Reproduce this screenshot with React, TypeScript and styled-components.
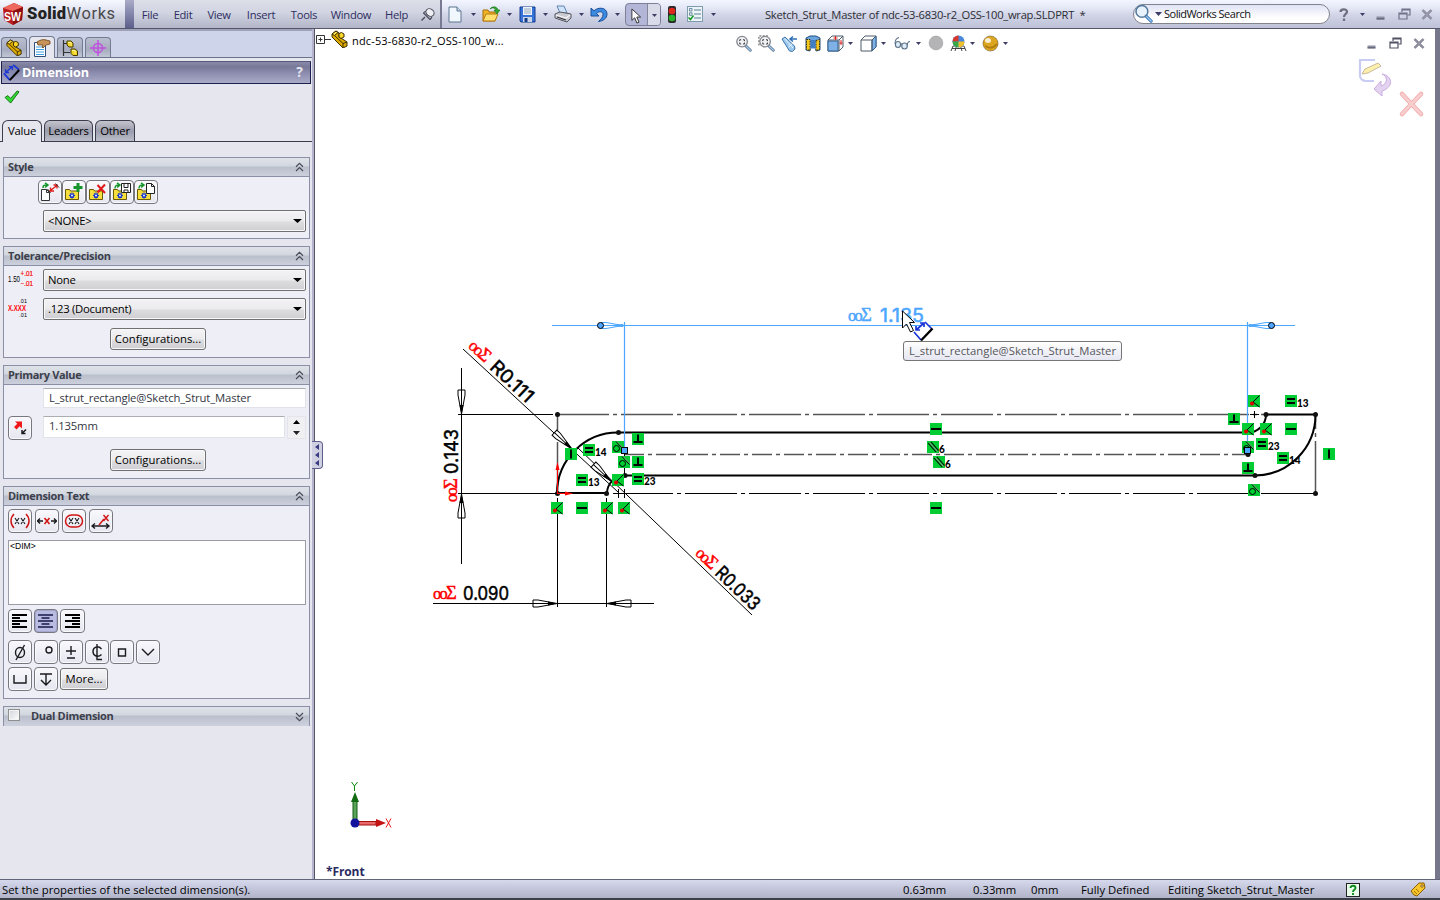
import React from 'react';
import styled, { createGlobalStyle, css } from 'styled-components';

const Global = createGlobalStyle`
  * { box-sizing: border-box; }
  html, body { margin: 0; padding: 0; }
  body { background: #fff; font-family: 'Open Sans', 'Noto Sans', sans-serif; font-size: 11.3px; color: #111; overflow: hidden; }
  svg { display: block; flex: none; }
`;

/* ---------- frame ---------- */
const Window = styled.div`
  width: 1440px; height: 900px; display: flex; flex-direction: column; overflow: hidden;
`;
const TopBar = styled.header`
  height: 29px; flex: none; display: flex; align-items: stretch;
  background: linear-gradient(#f3f6ff 0, #e4e8f6 8px, #d3d7e8 14px, #bfc2d8 27px);
  border-bottom: 1px solid #55566a; color: #2d2d62;
`;
const Brand = styled.div`
  width: 125px; display: flex; align-items: center; gap: 3px; padding: 0 0 1px 2px;
  background: linear-gradient(#f6f8ff 0, #e3e6f2 10px, #d0d3e0 16px, #b6b9c9 27px);
`;
const BrandName = styled.div`
  font: 16.5px/20px 'Roboto', sans-serif; color: #4a4a4c; letter-spacing: 0.6px; padding-top: 1px;
  b { font-weight: 900; color: #222; letter-spacing: 0.3px; }
`;
const BrandEdge = styled.div`
  width: 9px; background: linear-gradient(#a9abc8, #5d5f8c);
`;
const MenuBar = styled.nav`
  width: 308px; display: flex; align-items: center; padding: 1px 0 0 0;
  background: linear-gradient(#dcdfe8 0, #d2d5e2 12px, #b4b7c9 27px);
  border-right: 2px solid #777a92;
  svg { margin-left: 5px; }
`;
const MenuItem = styled.span<{ $w: number }>`
  width: ${p => p.$w}px; text-align: center; font-size: 11.2px; letter-spacing: -0.3px; color: #2d2d62;
`;
const Tools = styled.div`
  display: flex; align-items: center; width: 322px; padding-left: 2px;
`;
const Slot = styled.span<{ $w?: number }>`
  width: ${p => p.$w ?? 22}px; height: 24px; display: flex; align-items: center; justify-content: center; flex: none;
`;
const SplitButton = styled.span`
  width: 36px; height: 23px; margin: 0 3px 0 1px; display: flex; flex: none; border: 1px solid #7e7f98; border-radius: 4px; overflow: hidden;
  background: #b4b6d8;
  > * + * { background: #d9dbe9; border-left: 1px solid #85869c; }
`;
const DocTitle = styled.div`
  width: 369px; align-self: center; padding-left: 1px; color: #2c2c35; font-size: 11.2px; white-space: pre; letter-spacing: -0.27px;
`;
const SearchBox = styled.div`
  width: 197px; height: 20px; align-self: center; display: flex; align-items: center; border: 1px solid #83848f; border-radius: 10px;
  background: linear-gradient(#dfe3f4, #fff 70%); color: #111; font-size: 11px; letter-spacing: -0.5px; gap: 2px; padding-bottom: 1px;
`;
const WindowKeys = styled.div`
  display: flex; align-items: center; padding-left: 4px;
`;
const Body = styled.div`
  flex: 1; display: flex; min-height: 0;
`;
const StatusBar = styled.footer`
  height: 21px; flex: none; display: flex; align-items: center; padding: 1px 0 0 2px; color: #000;
  border-top: 1px solid #62647a; border-bottom: 2px solid #3d4048;
  background: linear-gradient(#d6d8ec, #c3c6db 50%, #b2b5ca);
`;
const StatusCell = styled.span<{ $w: number }>`
  width: ${p => p.$w}px; flex: none; white-space: nowrap;
`;

/* ---------- property manager ---------- */
const Panel = styled.aside`
  width: 315px; flex: none; background: #e6e6ef; display: flex; flex-direction: column; position: relative;
  border-right: 1px solid #55566e; box-shadow: inset -2px 0 #b4b5cb; padding-right: 2px;
`;
const TabStrip = styled.div`
  height: 29px; flex: none; background: #ced4e9; border-top: 2px solid #9fa1b9; border-bottom: 1px solid #6c7489;
  display: flex; align-items: flex-end; gap: 2px; padding-left: 1px;
`;
const IconTab = styled.div<{ $on?: boolean }>`
  width: 26px; height: ${p => (p.$on ? 22 : 20)}px; margin-bottom: ${p => (p.$on ? -1 : 0)}px;
  border: 1px solid #727b90; border-bottom: 0; border-radius: 4px 4px 0 0;
  background: ${p => (p.$on ? '#e6e6ef' : 'linear-gradient(#b9bfd0, #a6acbd 60%, #c0c6d5)')};
  display: flex; align-items: center; justify-content: center;
`;
const TitleBar = styled.div`
  height: 23px; flex: none; margin: 3px 1px 0 1px; padding: 0 7px 0 1px; border: 1px solid #1c2150; border-top-color: #55587c;
  background: linear-gradient(#8a8bab 0, #777898 5px, #8c8daf 11px, #a9aac6 21px);
  display: flex; align-items: center; gap: 2px; color: #fff;
  svg { margin-top: -1px; }
  b { flex: 1; font-size: 12.6px; letter-spacing: -0.05px; }
  i { font: 700 14px/18px 'Open Sans', sans-serif; margin-top: -2px; color: #e4e4ee; }
`;
const OkRow = styled.div`
  height: 36px; flex: none; padding: 6px 0 0 4px;
`;
const PageTabs = styled.div`
  height: 22px; flex: none; border-bottom: 1px solid #3b3d4c; display: flex; align-items: flex-end; gap: 2px; padding-left: 2px;
`;
const PageTab = styled.div<{ $w: number; $on?: boolean }>`
  width: ${p => p.$w}px; height: ${p => (p.$on ? 22 : 21)}px; margin-bottom: ${p => (p.$on ? -1 : 0)}px;
  border: 1px solid #3b3d4c; border-bottom: 0; border-radius: 6px 6px 0 0; text-align: center; line-height: 20px;
  background: ${p => (p.$on ? '#e6e6ef' : 'linear-gradient(#c3c4cc, #9b9dad 50%, #bbbdca)')};
  font-size: 11.3px; letter-spacing: -0.2px; color: #000;
`;
const Groups = styled.div`
  display: flex; flex-direction: column; gap: 7px; padding: 15px 2px 0 3px;
`;
const GroupBox = styled.section<{ $h: number }>`
  height: ${p => p.$h}px; border: 1px solid #8b8fa5; background: #eeeef7; display: flex; flex-direction: column;
`;
const GroupHead = styled.div<{ $open?: boolean }>`
  height: 19px; flex: none; padding: 0 5px 0 4px; display: flex; align-items: center;
  background: linear-gradient(#dfe2e8 0, #d2d7df 8px, #b9bfcb 9px, #ccd0dc 18px);
  ${p => p.$open && css`border-bottom: 1px solid #8b8fa5;`}
  b { flex: 1; font-size: 11px; line-height: 16px; margin-top: ${p => (p.$open ? 0 : -1)}px; color: #3c3f4c; font-weight: 700; letter-spacing: -0.33px; }
`;
const Row = styled.div<{ $l?: number; $t?: number; $gap?: number; $h?: number }>`
  display: flex; align-items: flex-start; padding-left: ${p => p.$l ?? 4}px; margin-top: ${p => p.$t ?? 0}px; gap: ${p => p.$gap ?? 0}px;
  height: ${p => p.$h ?? 24}px; flex: none;
`;
const Key = styled.span<{ $on?: boolean; $w?: number; $h?: number }>`
  width: ${p => p.$w ?? 24}px; height: ${p => p.$h ?? 24}px; flex: none; border: 1px solid #77787f; border-radius: 4px;
  display: flex; align-items: center; justify-content: center;
  background: ${p => (p.$on ? '#b9bbe0' : 'linear-gradient(#f8f8fc, #e6e6f0)')};
  box-shadow: inset 0 0 0 1px ${p => (p.$on ? '#a5a7cf' : '#fafafd')};
`;
const Combo = styled.div`
  width: 263px; height: 22px; flex: none; border: 1px solid #707070; border-radius: 2px; padding: 0 3px 1px 4px;
  background: linear-gradient(#f3f3f5 0, #ebebee 10px, #dddde0 11px, #cfcfd3 20px); box-shadow: inset 0 0 0 1px #f8f8fa;
  display: flex; align-items: center; justify-content: space-between; color: #000; letter-spacing: -0.25px; line-height: 18px;
`;
const PushButton = styled.div<{ $w: number }>`
  width: ${p => p.$w}px; height: 22px; flex: none; border: 1px solid #707070; border-radius: 3px; color: #000;
  background: linear-gradient(#f4f4f6 0, #ebebee 10px, #dddde0 11px, #cfcfd3 20px); box-shadow: inset 0 0 0 1px #f8f8fa;
  text-align: center; line-height: 20px;
`;
const Gutter = styled.span`
  width: 35px; height: 22px; flex: none; display: flex;
`;
const Field = styled.div<{ $w: number; $h: number }>`
  width: ${p => p.$w}px; height: ${p => p.$h}px; flex: none; background: #fff; border: 1px solid #e2e3ea; border-top-color: #abadb3;
  padding: 1px 5px; line-height: 16px; color: #33363f; letter-spacing: -0.14px;
`;
const Spinner = styled.div`
  width: 19px; height: 23px; margin-left: 2px; background: #f0f0f3; border: 1px solid #e4e4ea;
  display: flex; flex-direction: column; justify-content: space-around; align-items: center;
`;
const NoteArea = styled.div`
  height: 65px; flex: none; margin: 7px 3px 0 4px; border: 1px solid #9a9ca8; background: #fff;
  font: 8.6px/10px 'Liberation Sans', Arial, sans-serif; color: #000; padding-left: 1px;
`;
const Check = styled.span`
  width: 12px; height: 12px; margin: -3px 11px 0 0; border: 1px solid #8e8f8f; background: linear-gradient(135deg, #cfd3da, #fff);
  box-shadow: inset 0 0 0 1px #f4f4f4;
`;
const Splitter = styled.div`
  position: absolute; left: 312px; top: 412px; width: 11px; height: 28px; z-index: 2; border: 1px solid #5f618c; border-left: 0;
  border-radius: 0 4px 4px 0; background: #cfd0e2; display: flex; align-items: center; justify-content: center;
`;

/* ---------- graphics area ---------- */
const Viewport = styled.main`
  flex: 1; position: relative; background: #fff; border-right: 5px solid #76778a; overflow: hidden;
`;
const TreeNode = styled.div`
  position: absolute; left: 1px; top: 0; height: 22px; display: flex; align-items: center;
  font-size: 11px; color: #000; svg + svg { margin: -3px 0 0 -1px; } span { margin-left: 3px; padding-top: 1px; letter-spacing: 0.15px; }
`;
const HeadsUp = styled.div`
  position: absolute; left: 417px; top: 2px; display: flex; height: 24px; align-items: center;
`;
const DocKeys = styled.div`
  position: absolute; right: 4px; top: 2px; display: flex; height: 24px;
`;
const Corner = styled.div`
  position: absolute; left: 1043px; top: 29px;
`;
const Tip = styled.div`
  position: absolute; left: 588px; top: 312px; width: 219px; height: 20px; border: 1px solid #767676; border-radius: 3px;
  background: linear-gradient(#fff, #e5e6f1); color: #55565c; text-align: center; line-height: 17px; white-space: nowrap;
`;
const ViewName = styled.b`
  position: absolute; left: 11px; top: 835px; font-size: 12px; line-height: 16px; color: #2a2a60; letter-spacing: -0.1px;
`;
const Canvas = styled.svg`
  position: absolute; left: 0; top: 0;
`;

/* ---------- small glyphs ---------- */
const Caret = ({ c = '#3c3d66', w = 5 }: { c?: string; w?: number }) => (
  <svg width={w} height={w === 5 ? 3 : 4} viewBox="0 0 10 6" preserveAspectRatio="none"><path d="M0 0h10L5 6z" fill={c} /></svg>
);
const Chevrons = ({ down }: { down?: boolean }) => (
  <svg width="9" height="10" viewBox="0 0 9 10" fill="none" stroke="#484b58" strokeWidth="1.2" transform={down ? 'scale(1,-1)' : undefined}>
    <path d="M1 4.8 4.5 1.4 8 4.8M1 9 4.5 5.6 8 9" />
  </svg>
);
const Logo = () => (
  <svg width="22" height="23" viewBox="0 0 22 23">
    <path d="M1 6 12 1l9 4-1 13-9 5L2 18z" fill="#b91c1c" />
    <path d="M1 6 12 1l9 4-10 4z" fill="#ef6a5e" />
    <path d="M11 9l10-4-1 13-9 5z" fill="#8e0f12" />
    <text x="2" y="18.5" fontFamily="Liberation Sans" fontWeight="700" fontSize="12.5" fill="#fff" textLength="17" lengthAdjust="spacingAndGlyphs">SW</text>
  </svg>
);
const Part = ({ s = 18 }: { s?: number }) => (
  <svg width={s} height={s} viewBox="0 0 18 18" stroke="#3a2c00" strokeWidth="1" strokeLinejoin="round">
    <path d="M1 4 5 1l3 2v4l5 3 3 2v4l-4 2L3 9 1 7z" fill="#e0ab00" />
    <path d="M1 4 5 1l2 1.500-3.500 3z" fill="#ffe14d" />
    <path d="M8 3.500 10.500 2.500 13 4v3l-3 1.500L8 7z" fill="#ffd829" />
    <path d="M3.500 5.500l8.500 8v4M12 13.500l4-1.500" fill="none" />
  </svg>
);
const Pin = () => (
  <svg width="16" height="16" viewBox="0 0 16 16" fill="#d5d6de" stroke="#4b4c5c" strokeWidth="1.1">
    <path d="M5 10 1.500 13.500" strokeWidth="1.500" /><path d="M3.500 6l6.500 6.500c1.500-1 2-2.500 1.500-4L8 4.500C6 4 4.500 4.500 3.500 6z" fill="#b4b5c2" /><ellipse cx="10" cy="5.500" rx="4.300" ry="3.500" transform="rotate(35 10 5.500)" fill="#eeeef3" />
  </svg>
);
const NewDoc = () => (
  <svg width="14" height="17" viewBox="0 0 14 17"><path d="M1 1h8l4 4v11H1z" fill="#f0f8fd" stroke="#5d7590" /><path d="M9 1v4h4" fill="#c9dced" stroke="#5d7590" /></svg>
);
const Open = () => (
  <svg width="18" height="17" viewBox="0 0 18 17"><path d="M1 4h5l1 2h6v9H1z" fill="#f0b428" stroke="#a86e08" /><path d="M1 15 4 8h12l-3 7z" fill="#ffdf6e" stroke="#b87a10" /><path d="M8 3c3-2 5-1 6 1h-2l3 4 3-4h-2c-1-4-6-4-8-1z" fill="#2faa2f" stroke="#137013" strokeWidth=".6" /></svg>
);
const Save = () => (
  <svg width="17" height="17" viewBox="0 0 17 17"><path d="M1 1h15v15H2l-1-1z" fill="#3573d8" stroke="#123a8c" /><path d="M4 1h9v8H4z" fill="#eef3fb" /><path d="M5 3h7M5 5h7M5 7h7" stroke="#9ab" /><path d="M4 11h9v5H4z" fill="#c9d6ea" /><path d="M5.500 12h3v4h-3z" fill="#163a80" /></svg>
);
const Print = () => (
  <svg width="18" height="18" viewBox="0 0 18 18"><path d="M3 1h7l3 7H6z" fill="#cfe4fb" stroke="#6184b0" /><path d="M1 9l5-2 11 2v4l-4 4-12-4z" fill="#c9cad2" stroke="#55565f" /><path d="M2 10l10 3 4-3" fill="none" stroke="#f4f4f7" strokeWidth="1.300" /><path d="M3 12l9 3" stroke="#33343a" strokeWidth="1.300" /></svg>
);
const Undo = () => (
  <svg width="18" height="17" viewBox="0 0 18 17"><path d="M1 2v8h8L6.500 7.500C9 5 13 5 13 8.500c0 3-2 4.500-4.500 7C13 15 17 12.500 17 8 17 1.500 8.500.5 4 4.800z" fill="#3d8be0" stroke="#1b4f9c" /></svg>
);
const Arrow = ({ s = 16 }: { s?: number }) => (
  <svg width={s * 0.66} height={s} viewBox="0 0 12 18"><path d="M1 1v13l3.200-3 2.500 6 2.400-1-2.500-5.800H11z" fill="#fff" stroke="#333" strokeWidth="1.100" /></svg>
);
const Traffic = () => (
  <svg width="8" height="17" viewBox="0 0 8 17"><rect width="8" height="17" rx="2" fill="#2b2b2b" /><circle cx="4" cy="5" r="3.300" fill="#e0281e" /><circle cx="4" cy="12" r="3.300" fill="#27b52a" /></svg>
);
const Options = () => (
  <svg width="16" height="16" viewBox="0 0 16 16"><rect x=".5" y=".5" width="15" height="15" fill="#edf4f6" stroke="#7f9caf" /><path d="M7 4h7M7 8h7M7 12h7" stroke="#5a8098" /><path d="M2.500 2.500h2.500v2.500H2.500zM2.500 6.800h2.500v2.500H2.500z" fill="none" stroke="#6a8ca0" /><path d="M1.500 11.500l2 2 3-4" fill="none" stroke="#1a9a2a" strokeWidth="1.600" /></svg>
);
const Lens = ({ s = 18, blue, mark }: { s?: number; blue?: boolean; mark?: 'fit' | 'area' }) => (
  <svg width={s} height={s} viewBox="0 0 18 18">
    <path d="M11 11l5.200 5.200" stroke={blue ? '#2f74b8' : '#5b7590'} strokeWidth="3" strokeLinecap="round" />
    <path d="M11.500 11.500l4.700 4.700" stroke="#a9cdee" strokeWidth="1.300" strokeLinecap="round" />
    {mark === 'area' && <path d="M1 11V1h11" fill="none" stroke="#444" strokeDasharray="2 1.500" />}
    <circle cx="7.500" cy="7" r="5.600" fill={blue ? '#e6f2fc' : '#eef0f3'} fillOpacity=".85" stroke={blue ? '#54789c' : '#85898f'} strokeWidth="1.400" />
    {mark && <path d="M5 6.500V5h1.500M8.500 5H10v1.500M10 8v1.500H8.500M6.500 9.500H5V8" fill="none" stroke="#333" />}
  </svg>
);
const PrevView = () => (
  <svg width="17" height="17" viewBox="0 0 17 17"><path d="M1 4 4 2l9.500 9 .5 3-2.500 2.500-3-.5z" fill="#9cc8ee" stroke="#3d74a8" /><path d="M3.500 3.500l8.500 9.500M7.500 12l4-3.500" stroke="#e9f5ff" /><path d="M9 4h7M12 1.500 9 4l3 2.500" fill="none" stroke="#2f6fb4" strokeWidth="1.500" /></svg>
);
const Section = () => (
  <svg width="16" height="17" viewBox="0 0 16 17"><path d="M1 3l4-2h6l4 2v12l-4 1V6H5v10l-4-1z" fill="#6ba6e2" stroke="#23507f" /><path d="M1.500 4.500h3.500v11l-3.500-1zM11 5.500l3.500-1V14.500L11 15.500z" fill="#f3c620" stroke="#3d3000" strokeDasharray="1.500 1" /><path d="M5.500 5.500h5v8h-5z" fill="#3f7fc6" /></svg>
);
const Cube = ({ red }: { red?: boolean }) => (
  <svg width="17" height="17" viewBox="0 0 17 17"><path d="M1 5 5 1h11v11l-4 4H1z" fill="#fff" stroke="#4d5a6b" /><path d={red ? 'M1 6h10v10H1z' : 'M12 5l4-4v11l-4 4z'} fill="#7fb1e6" stroke="#2f5f94" /><path d="M1 5h11v11M12 5l4-4" fill="none" stroke="#4d5a6b" />{red && <path d="M8.500 1v4M6.500 3h4M14 5v5M12.500 8h3" stroke="#d22" />}</svg>
);
const Glasses = () => (
  <svg width="18" height="14" viewBox="0 0 18 14" fill="#dcecf8" stroke="#5d7288" strokeWidth="1.100"><ellipse cx="5" cy="8.500" rx="2.600" ry="3" /><ellipse cx="11.500" cy="10" rx="2.800" ry="3" /><path d="M2 8c0-4 1.500-6 4-6.500M7.700 8.500c.5-1 .8-1 1.300 0M14.300 9.500c0-3 1-4 2.700-4" fill="none" /></svg>
);
const Sphere = ({ c, s = 17, dim }: { c: string; s?: number; dim?: boolean }) => (
  <svg width={s} height={s} viewBox="0 0 17 17"><circle cx="8.500" cy="8.500" r="7.600" fill={c} stroke="#000" strokeOpacity={dim ? 0.08 : 0.3} />
    {!dim && <><path d="M3 11c3 2 8 3 12-2" fill="none" stroke="#7a4a00" strokeOpacity=".45" strokeWidth="2" /><ellipse cx="6" cy="5.500" rx="3" ry="2.500" fill="#fff" fillOpacity=".8" /></>}
  </svg>
);
const Scene = () => (
  <svg width="17" height="17" viewBox="0 0 17 17"><path d="M1 16l2-5h11l2 5M2 13.500h13M5 16l1.500-5M12 16l-1.500-5" fill="none" stroke="#444" /><circle cx="8.500" cy="6.500" r="6" fill="#4b88dc" /><path d="M8.500 6.500h-6a6 6 0 0 1 6-6z" fill="#d8372c" /><path d="M8.500 6.500h-6a6 6 0 0 0 6 6z" fill="#3aa845" /><path d="M8.500 6.500h6a6 6 0 0 1-6 6z" fill="#efc02a" /></svg>
);
const Help = ({ c = '#6e6f80' }: { c?: string }) => (
  <svg width="10" height="13" viewBox="0 0 10 13" fill="none" stroke={c} strokeWidth="2.300"><path d="M1.500 4C1.500 .5 8 .5 8 3.700 8 6 5 5.700 5 9M5 10.500V13" /></svg>
);
const Minimize = ({ c = '#8d8fa3' }: { c?: string }) => <svg width="10" height="11" viewBox="0 0 10 11"><path d="M.5 7.500h8v2.500h-8z" fill={c} /><path d="M.5 10h8" stroke="#444658" /></svg>;
const Restore = ({ c = '#70728a' }: { c?: string }) => (
  <svg width="13" height="12" viewBox="0 0 13 12" fill="none" stroke={c} strokeWidth="1.200"><path d="M4 4V1h8v6H9.500M4 1.800h8" /><path d="M1 5h8v6H1zM1 5.800h8" /></svg>
);
const Close = ({ c = '#77798e' }: { c?: string }) => <svg width="12" height="11" viewBox="0 0 12 11"><path d="M1.500 1l9 9M10.500 1l-9 9" stroke={c} strokeWidth="2.400" /><path d="M1.500 1l9 9M10.500 1l-9 9" stroke="#c9cad6" strokeWidth=".7" /></svg>;
const PropIcon = () => (
  <svg width="18" height="18" viewBox="0 0 18 18"><path d="M1.500 3.500h11v14h-11z" fill="#fff" stroke="#30507a" /><path d="M3 8h8M3 10.500h8M3 13h8M3 15.500h8" stroke="#3f9fe0" /><path d="M4 3c3-2 6-3 9-2l4 1v3l-4 1-3 3-1-1 1-2-5 0z" fill="#c8935a" stroke="#6b4319" strokeWidth=".8" /></svg>
);
const ConfigIcon = () => (
  <svg width="18" height="18" viewBox="0 0 18 18"><path d="M2.500 1v16M2 4.500h4M2 13.500h7" stroke="#333" strokeWidth="1.200" fill="none" /><path d="M6 2h4l2 2v4H8L6 6zM10 10h4l2.500 2v4.500H12l-2-2z" fill="#f3d321" stroke="#473a00" /><path d="M7 3.500h3v3M11 11.500h3v3" stroke="#fff6a0" fill="none" /></svg>
);
const TargetIcon = () => (
  <svg width="16" height="16" viewBox="0 0 16 16" fill="none" stroke="#c050e0" strokeWidth="1.500"><circle cx="8" cy="8" r="4.600" /><path d="M8 0v16M0 8h16" /></svg>
);
const DimIcon = ({ s = 17 }: { s?: number }) => (
  <svg width={s} height={s} viewBox="0 0 20 20"><path d="M2 12 13 2l6 5L8 19z" fill="#7e86b5" fillOpacity=".35" /><path d="M1 11l7 8M12 1l7 6" stroke="#1a35d8" strokeWidth="2" /><path d="M8 19 19 7" stroke="#000" strokeWidth="2.400" /><path d="M3 10l8-7M3 6v4h4M7 3h4v4" fill="none" stroke="#1a35d8" strokeWidth="1.500" /></svg>
);
const FolderMark = ({ kind }: { kind: 'add' | 'del' | 'save' | 'load' }) => (
  <svg width="20" height="20" viewBox="0 0 20 20">
    <path d="M1.500 7.500h4l1 1.500h8v8.500h-13z" fill="#f6df3c" stroke="#6b5a00" />
    <path d="M8 10.500v6M5 13.500h6M6 11.500l4 4M10 11.500l-4 4" stroke="#1434d0" strokeWidth="1.200" /><circle cx="8" cy="13.500" r=".9" fill="#fff" />
    {kind === 'add' && <path d="M14 1v9M9.500 5.500h9" stroke="#17952a" strokeWidth="3" />}
    {kind === 'del' && <path d="M9.500 3l7.500 8M17 2.500l-7.500 8" stroke="#e01818" strokeWidth="2" />}
    {kind === 'save' && <path d="M9.500 1.500h9v9h-9zM12 1.500v4h4v-4M12 10V8h4v2" fill="#fff" stroke="#222" />}
    {kind === 'load' && <path d="M10.500 1.500h5l3 3v7h-8zM15.500 1.500v3h3" fill="#fff" stroke="#222" />}
    {(kind === 'save' || kind === 'load') && <path d="M3 6.500c0-3 1-3.500 4-3.500M5 .8l3 2.200-3 2.500" fill="none" stroke="#17952a" strokeWidth="1.500" />}
  </svg>
);
const DefaultsIcon = () => (
  <svg width="20" height="20" viewBox="0 0 20 20"><path d="M1.500 7.500h5l3 3v8h-8zM6.500 7.500v3h3" fill="#fff" stroke="#333" /><path d="M3 6c0-3 1-3 4-3M5 .8l3 2.200-3 2.500" fill="none" stroke="#17952a" strokeWidth="1.500" /><path d="M9 9.500 17 3.500M10.500 5.500v3.500h3.500M13.500 3h3.500v3.500" fill="none" stroke="#e01818" strokeWidth="1.300" /><path d="M7.500 7l3 4M15.500 1.500l3.500 4" stroke="#333" /></svg>
);
const TolIcon = () => (
  <svg width="30" height="22" viewBox="0 0 30 22" fontFamily="Liberation Sans"><text x="0" y="13" fontSize="9" fill="#000" textLength="12" lengthAdjust="spacingAndGlyphs">1.50</text><text x="12.500" y="7" fontSize="7.500" fill="#f00" stroke="#f00" strokeWidth=".2" textLength="12.500" lengthAdjust="spacingAndGlyphs">+.01</text><text x="12.500" y="17" fontSize="7.500" fill="#f00" stroke="#f00" strokeWidth=".2" textLength="12.500" lengthAdjust="spacingAndGlyphs">−.01</text></svg>
);
const PrecIcon = () => (
  <svg width="28" height="20" viewBox="0 0 28 20" fontFamily="Liberation Sans"><text x="0" y="12.500" fontSize="9" fontWeight="700" fill="#f00" textLength="18" lengthAdjust="spacingAndGlyphs">X.XXX</text><text x="11" y="4.500" fontSize="5.500" fill="#000" textLength="8">.01</text><text x="11" y="18.500" fontSize="5.500" fill="#000" textLength="8">.01</text></svg>
);
const Lines = ({ kind }: { kind: 'l' | 'c' | 'r' }) => {
  const rows = [15, 8, 15, 8, 15];
  return (
    <svg width="16" height="15" viewBox="0 0 16 15">
      {rows.map((n, i) => <rect key={i} x={kind === 'l' ? 0 : kind === 'c' ? (15 - n) / 2 : 15 - n} y={i * 3} width={n} height="2" fill={kind === 'c' ? '#3f426e' : '#000'} />)}
    </svg>
  );
};
const Stroke = ({ d, c = '#1b1b1f', children }: { d?: string; c?: string; children?: React.ReactNode }) => (
  <svg width="20" height="20" viewBox="0 0 20 20" fill="none" stroke={c} strokeWidth="1.400">{d && <path d={d} />}{children}</svg>
);

/* ---------- sketch ---------- */
type Rel = 'v' | 'h' | 'eq' | 'perp' | 'tan' | 'par' | 'co';
const relations: [number, number, Rel, string?][] = [
  [571, 454, 'v'], [589, 450, 'eq', '14'], [618, 447, 'tan'], [638, 439, 'perp'], [624, 462, 'tan'], [638, 462, 'perp'],
  [582, 480, 'eq', '13'], [618, 480, 'co'], [638, 479, 'eq', '23'], [557, 508, 'co'], [582, 508, 'h'], [607, 508, 'co'], [624, 508, 'co'],
  [936, 429, 'h'], [933, 447, 'par', '6'], [939, 462, 'par', '6'], [936, 508, 'h'],
  [1254, 401, 'co'], [1291, 401, 'eq', '13'], [1234, 419, 'perp'], [1248, 429, 'co'], [1266, 429, 'co'], [1291, 429, 'h'],
  [1248, 447, 'tan'], [1262, 444, 'eq', '23'], [1283, 458, 'eq', '14'], [1329, 454, 'v'], [1248, 468, 'perp'], [1254, 490, 'tan'],
];
const RelMark = ({ x, y, kind, n }: { x: number; y: number; kind: Rel; n?: string }) => (
  <g transform={`translate(${x - 6} ${y - 6})`} fill="none">
    <rect width="12" height="12" fill="#00cc33" />
    {kind === 'v' && <path d="M6 1.500v9" stroke="#000" strokeWidth="2" />}
    {kind === 'h' && <path d="M1 6h10" stroke="#000" strokeWidth="2" />}
    {kind === 'eq' && <path d="M2 4h8M2 8h8" stroke="#000" strokeWidth="2" />}
    {kind === 'perp' && <path d="M6 1.500V9M1.500 9h9" stroke="#000" strokeWidth="2" />}
    {kind === 'par' && <g><path d="M1 2l8 9M4 1l7.500 8.500" stroke="#000" strokeWidth="1.100" /><path d="M2.500 1.500l8 9" stroke="#b77fa0" strokeWidth=".8" /></g>}
    {kind === 'tan' && <g stroke="#000"><circle cx="4.500" cy="7.500" r="3" /><path d="M4 .5l7.500 8" /><path d="M5.200 .5l6.500 7" stroke="#b77fa0" strokeWidth=".7" /></g>}
    {kind === 'co' && <g><path d="M11.500 .5 3.500 8.500M5 7l6.500 5" stroke="#000" /><circle cx="4" cy="8.500" r="2" fill="#e00000" /></g>}
    {n && <text x="12" y="12" fontFamily="Lato" fontWeight="900" fontSize="11" fill="#000" textLength={n.length * 5.800} lengthAdjust="spacingAndGlyphs">{n}</text>}
  </g>
);
const DimText = ({ t, at, gap, len, c, c2 }: { t: string; at: string; gap: number; len: number; c: string; c2: string }) => (
  <g transform={at}>
    <text x="1" y="-1" fontFamily="Liberation Serif" fontSize="18.500" fill={c} stroke={c} strokeWidth=".45"><tspan fontSize="16.500" textLength="13" lengthAdjust="spacingAndGlyphs" letterSpacing="-1.700">oo</tspan><tspan dx="0">Σ</tspan></text>
    <text x={gap} y="0" fontFamily="Inter" fontSize="18.500" fill={c2} stroke={c2} strokeWidth=".5" textLength={len} lengthAdjust="spacingAndGlyphs">{t}</text>
  </g>
);
const Head = ({ at, c = '#000' }: { at: string; c?: string }) => (
  <g transform={at}><path d="M0 0-19 3.500h-5v-7h5z" fill="#fff" stroke={c} /><path d="M0 0-9 2v-4z" fill={c} /><path d="M-24 0H0" stroke={c} /></g>
);
const BLUE = '#4da6ff';

const Sketch = () => (
  <Canvas width="1120" height="850" viewBox="315 29 1120 850" fill="none">
    <g strokeWidth="1.500" stroke="#555" strokeDasharray="52 4 4 4"><path d="M557 414.500H1266" /><path d="M557.500 414v79" strokeDashoffset="36" /><path d="M1315.500 493V414" /></g>
    <path d="M557 493.500h758" stroke="#000" strokeDasharray="52 4 4 4" />
    <path d="M624 454.500h624" stroke="#555" strokeWidth="1.500" strokeDasharray="20 4 4 4" />
    <g stroke="#000" strokeWidth="2">
      <path d="M607 493H557A61 61 0 0 1 618 432.500H1248A18 18 0 0 0 1266 414.500H1315.500A61 61 0 0 1 1255 475.500H625A18 18 0 0 0 607 493" />
    </g>
    <path d="M624.500 450v25M1247.500 432v22M614 493.500h15M618.500 489v9M624.500 489v9M1250 414.500h9M1254.500 411v7" stroke="#000" />
    <g fill="#111">
      {[[557.5, 414.5], [1315.5, 414.5], [1315.5, 493.5], [557.5, 493.5], [618.5, 432.5], [625, 475.5], [606.5, 493.5], [1266, 414.5], [1255, 475.5], [1248, 454.5]].map(([x, y], i) => <circle key={i} cx={x} cy={y} r="2.500" />)}
    </g>
    <g stroke="#000">
      <path d="M461.500 368v196M458 414.500h95M458 493.500h98M557.500 498v109M606.500 498v109M433 603.500h221" />
      <path d="M463 349 618 492M578 448 752 615" />
    </g>
    <Head at="translate(461.500 414) rotate(90)" />
    <Head at="translate(461.500 494) rotate(-90)" />
    <Head at="translate(557 603.500)" />
    <Head at="translate(607 603.500) rotate(180)" />
    <Head at="translate(572 449) rotate(43)" />
    <Head at="translate(611 481) rotate(43)" />
    <path d="M557.500 493V465M557 493.500h15" stroke="#f00" /><path d="M557.500 462l2 8h-4zM573 493.500l-8-2v4z" fill="#f00" />
    <g stroke={BLUE}>
      <path d="M552 325.500h743M624.500 322v128M1247.500 322v128" strokeWidth="1.200" />
      <path d="M601 322.500h5l17 3-17 3h-5M1271 322.500h-5l-17 3 17 3h5M612 325.500l11-1v2zM1260 325.500l-11-1v2z" />
      <circle cx="600.500" cy="325.500" r="3" fill={BLUE} stroke="#000" /><circle cx="1271.500" cy="325.500" r="3" fill={BLUE} stroke="#000" />
    </g>
    {relations.map(([x, y, k, n], i) => <RelMark key={i} x={x} y={y} kind={k} n={n} />)}
    <rect x="621.500" y="447.500" width="6" height="6" fill={BLUE} stroke="#000" /><rect x="1244.500" y="447.500" width="6" height="6" fill={BLUE} stroke="#000" />
    <DimText t="1.135" at="translate(847 322)" gap={33} len={44} c={BLUE} c2={BLUE} />
    <DimText t="0.143" at="translate(458 503) rotate(-90)" gap={29} len={45} c="#f00" c2="#000" />
    <DimText t="0.090" at="translate(432 600)" gap={31} len={46} c="#f00" c2="#000" />
    <DimText t="R0.111" at="translate(466 347) rotate(43)" gap={31} len={52} c="#f00" c2="#000" />
    <DimText t="R0.033" at="translate(693 554) rotate(43.800)" gap={29} len={54} c="#f00" c2="#000" />
    <path d="M902.500 311v17l4-4 4 8 3-1.500-4-8h5z" fill="#fff" stroke="#000" />
    <g transform="translate(913 321)"><path d="M1 11 12 1l7 7L8 19z" fill="#fff" /><path d="M1 11l7 8M12 1l7 7M3 9l8-7M3 5v4h4M7 2h4v4" stroke="#1a35d8" strokeWidth="1.700" /><path d="M8 19.500 19.500 7.500" stroke="#000" strokeWidth="2.400" /></g>
    <g><rect x="353" y="800" width="4" height="20" fill="#5aa55a" stroke="#155a15" /><path d="M355 792l4 10h-8z" fill="#126b12" /><rect x="358" y="821.500" width="18" height="3.500" fill="#e86a6a" stroke="#a51010" /><path d="M386 823l-10 4v-8z" fill="#c41212" /><circle cx="355" cy="823" r="4.500" fill="#12129c" /><path d="M351.500 782l3 4 3-4M354.500 786v5" stroke="#0a8a0a" /><path d="M386 818.500l5 9M391 818.500l-5 9" stroke="#f01818" /></g>
  </Canvas>
);

const menus: [string, number][] = [['File', 32], ['Edit', 34], ['View', 38], ['Insert', 46], ['Tools', 40], ['Window', 54], ['Help', 37]];

const Group = ({ title, h, children }: { title: string; h: number; children: React.ReactNode }) => (
  <GroupBox $h={h}><GroupHead $open><b>{title}</b><Chevrons /></GroupHead>{children}</GroupBox>
);
const Tool = ({ children }: { children: React.ReactNode }) => <><Slot>{children}</Slot><Slot $w={14}><Caret /></Slot></>;

export default function App() {
  return (
    <Window>
      <Global />
      <TopBar>
        <Brand><Logo /><BrandName><b>Solid</b>Works</BrandName></Brand>
        <BrandEdge />
        <MenuBar>
          {menus.map(([m, w]) => <MenuItem key={m} $w={w}>{m}</MenuItem>)}
          <Pin />
        </MenuBar>
        <Tools>
          <Tool><NewDoc /></Tool><Tool><Open /></Tool><Tool><Save /></Tool><Tool><Print /></Tool><Tool><Undo /></Tool>
          <SplitButton><Slot $w={21}><Arrow /></Slot><Slot $w={13}><Caret /></Slot></SplitButton>
          <Slot $w={16}><Traffic /></Slot><Slot $w={4} /><Tool><Options /></Tool>
        </Tools>
        <DocTitle>Sketch_Strut_Master of ndc-53-6830-r2_OSS-100_wrap.SLDPRT  *</DocTitle>
        <SearchBox><Lens s={19} blue /><Caret w={7} />SolidWorks Search</SearchBox>
        <WindowKeys>
          <Slot $w={20}><Help /></Slot><Slot $w={16}><Caret /></Slot><Slot $w={22}><Minimize /></Slot><Slot $w={24}><Restore /></Slot><Slot $w={22}><Close /></Slot>
        </WindowKeys>
      </TopBar>
      <Body>
        <Panel>
          <TabStrip>
            <IconTab><Part s={17} /></IconTab><IconTab $on><PropIcon /></IconTab><IconTab><ConfigIcon /></IconTab><IconTab><TargetIcon /></IconTab>
          </TabStrip>
          <TitleBar><DimIcon /><b>Dimension</b><i>?</i></TitleBar>
          <OkRow><svg width="17" height="14" viewBox="0 0 18 15"><path d="M1 8l3-2 3 3 7-8 2 1L7 14z" fill="#2edb2e" stroke="#116b11" /></svg></OkRow>
          <PageTabs><PageTab $w={40} $on>Value</PageTab><PageTab $w={49}>Leaders</PageTab><PageTab $w={40}>Other</PageTab></PageTabs>
          <Groups>
            <Group title="Style" h={82}>
              <Row $l={34} $t={3} $h={24}>
                <Key><DefaultsIcon /></Key><Key><FolderMark kind="add" /></Key><Key><FolderMark kind="del" /></Key><Key><FolderMark kind="save" /></Key><Key><FolderMark kind="load" /></Key>
              </Row>
              <Row $l={39} $t={6}><Combo>&lt;NONE&gt;<Caret w={9} c="#000" /></Combo></Row>
            </Group>
            <Group title="Tolerance/Precision" h={112}>
              <Row $t={3}><Gutter><TolIcon /></Gutter><Combo>None<Caret w={9} c="#000" /></Combo></Row>
              <Row $t={5}><Gutter><PrecIcon /></Gutter><Combo>.123 (Document)<Caret w={9} c="#000" /></Combo></Row>
              <Row $l={106} $t={6}><PushButton $w={96}>Configurations...</PushButton></Row>
            </Group>
            <Group title="Primary Value" h={114}>
              <Row $l={39} $t={3}><Field $w={263} $h={20}>L_strut_rectangle@Sketch_Strut_Master</Field></Row>
              <Row $t={4}>
                <Gutter><Key><Stroke><path d="M5 3.500h7v7L9.700 8.200 6.500 11.500 4 9l3.300-3.200z" fill="#f01818" stroke="none" /><path d="M16 11.500l-4 4M12 12v3.500h3.500" strokeWidth="1.500" /></Stroke></Key></Gutter>
                <Field $w={242} $h={22}>1.135mm</Field>
                <Spinner><svg width="7" height="4"><path d="M0 4 3.500 0 7 4z" /></svg><Caret w={7} c="#222" /></Spinner>
              </Row>
              <Row $l={106} $t={9}><PushButton $w={96}>Configurations...</PushButton></Row>
            </Group>
            <Group title="Dimension Text" h={213}>
              <Row $t={3} $gap={3}>
                <Key><Stroke><path d="M4 3c-4 4-4 10 0 14M16 3c4 4 4 10 0 14" stroke="#d01414" strokeWidth="1.500" /><path d="M5 7l4 6M9 7l-4 6M11 7l4 6M15 7l-4 6" strokeWidth="1.100" /></Stroke></Key>
                <Key><Stroke><path d="M0 10h6M3 7.500.5 10 3 12.500M14 10h6M17 7.500l2.500 2.500-2.500 2.500" /><path d="M7.500 7l5 6M12.500 7l-5 6" stroke="#d01414" strokeWidth="1.600" /></Stroke></Key>
                <Key><Stroke><rect x="1.500" y="4" width="17" height="12" rx="6" stroke="#d01414" strokeWidth="1.500" /><path d="M5 7l4 6M9 7l-4 6M11 7l4 6M15 7l-4 6" strokeWidth="1.100" /></Stroke></Key>
                <Key><Stroke><path d="M1 15h17M4 12.500 1 15l3 2.500M15 12.500l3 2.500-3 2.500" /><path d="M8 14l5-6M12.500 4l5 6M17.500 4l-5 6" stroke="#d01414" /></Stroke></Key>
              </Row>
              <NoteArea>&lt;DIM&gt;</NoteArea>
              <Row $t={4} $gap={2}>
                <Key><Lines kind="l" /></Key><Key $on><Lines kind="c" /></Key><Key $w={25}><Lines kind="r" /></Key>
              </Row>
              <Row $t={7} $gap={1.6}>
                <Key><Stroke><ellipse cx="10" cy="10.500" rx="4.500" ry="5" /><path d="M14.500 3 6 18" /></Stroke></Key>
                <Key><Stroke><circle cx="13" cy="8" r="3" /></Stroke></Key>
                <Key><Stroke d="M10 4v9M5 9h10M6 16h8" /></Key>
                <Key><Stroke d="M14.500 7C11 3 6 5 6 9.500S11 16 14.500 12.500M10 2v15.500h5" /></Key>
                <Key><Stroke d="M6.500 7h7v7h-7z" /></Key>
                <Key><Stroke d="M4 7l6 6 6-6" /></Key>
              </Row>
              <Row $t={3} $gap={2}>
                <Key><Stroke d="M4 6v8h12V6" /></Key>
                <Key><Stroke d="M4 5h12M10 5v11M5 11l5 5 5-5" /></Key>
                <Row $l={0} $t={1}><PushButton $w={48}>More...</PushButton></Row>
              </Row>
            </Group>
            <GroupBox $h={20}><GroupHead><Check /><b>Dual Dimension</b><Chevrons down /></GroupHead></GroupBox>
          </Groups>
          <Splitter><svg width="4" height="22" fill="#3b3c80"><path d="M4 0v6L0 3zM4 8v6l-4-3zM4 16v6l-4-3z" /></svg></Splitter>
        </Panel>
        <Viewport>
          <Sketch />
          <TreeNode>
            <svg width="16" height="11" viewBox="0 0 16 11" fill="none" stroke="#333"><path d="M.5 .500h8v8h-8zM2.500 4.500h4M4.500 2.500v4M9 4.500h6" /></svg>
            <Part /><span>ndc-53-6830-r2_OSS-100_w...</span>
          </TreeNode>
          <HeadsUp>
            <Slot $w={23}><Lens mark="fit" s={17} /></Slot><Slot $w={23}><Lens mark="area" s={17} /></Slot><Slot $w={23}><PrevView /></Slot><Slot $w={23}><Section /></Slot>
            <Slot><Cube red /></Slot><Slot $w={9}><Caret /></Slot><Slot $w={26}><Cube /></Slot><Slot $w={5}><Caret /></Slot>
            <Slot $w={31}><Glasses /></Slot><Slot $w={2}><Caret /></Slot><Slot $w={33}><Sphere c="#b4b4b6" s={16} dim /></Slot>
            <Slot $w={12}><Scene /></Slot><Slot $w={16}><Caret /></Slot><Slot $w={20}><Sphere c="#dba520" /></Slot><Slot $w={10}><Caret /></Slot>
          </HeadsUp>
          <DocKeys><Slot $w={24}><Minimize /></Slot><Slot $w={23}><Restore c="#505264" /></Slot><Slot $w={24}><Close c="#6a6c7e" /></Slot></DocKeys>
          <Corner>
            <svg width="68" height="60" viewBox="0 0 68 60" fill="none">
              <path d="M17 2H2v16c0 3 3 5 6 5h8" stroke="#c9cdf3" strokeWidth="2.200" />
              <path d="M4 16l3-5 13-6 3 3-13 7z" fill="#fdf0ad" stroke="#c9b99a" />
              <path d="M24 16c6 2 6 10-1 12v-5l-7 8 8 7v-5c12-4 11-15 0-17z" fill="#e4d2f1" stroke="#c9addf" />
              <path d="M44 36l19 20M63 36 44 56" stroke="#f0a9a9" strokeWidth="4.500" strokeLinecap="round" /><path d="M44 36l19 20M63 36 44 56" stroke="#f7cdcd" strokeWidth="3" strokeLinecap="round" />
            </svg>
          </Corner>
          <Tip>L_strut_rectangle@Sketch_Strut_Master</Tip>
          <ViewName>*Front</ViewName>
        </Viewport>
      </Body>
      <StatusBar>
        <StatusCell $w={901}>Set the properties of the selected dimension(s).</StatusCell>
        <StatusCell $w={70}>0.63mm</StatusCell><StatusCell $w={58}>0.33mm</StatusCell><StatusCell $w={50}>0mm</StatusCell>
        <StatusCell $w={87}>Fully Defined</StatusCell><StatusCell $w={178}>Editing Sketch_Strut_Master</StatusCell>
        <StatusCell $w={64}><svg width="14" height="14" viewBox="0 0 14 14"><rect x=".5" y=".5" width="13" height="13" fill="#e9fbe9" stroke="#222" /><path d="M4.500 5C4.500 2 9.500 2 9.500 5 9.500 7 7 6.500 7 9M7 10v2" fill="none" stroke="#0a8a1a" strokeWidth="1.800" /></svg></StatusCell>
        <svg width="16" height="15" viewBox="0 0 16 15"><path d="M1 9 9 1h5l1 5-8 8-3-1z" fill="#f7c52e" stroke="#8c5e00" /><circle cx="12" cy="4" r="1.200" fill="#fff" stroke="#8c5e00" /><path d="M4 9l3 3M6 7l3 3" stroke="#a87400" /></svg>
      </StatusBar>
    </Window>
  );
}
